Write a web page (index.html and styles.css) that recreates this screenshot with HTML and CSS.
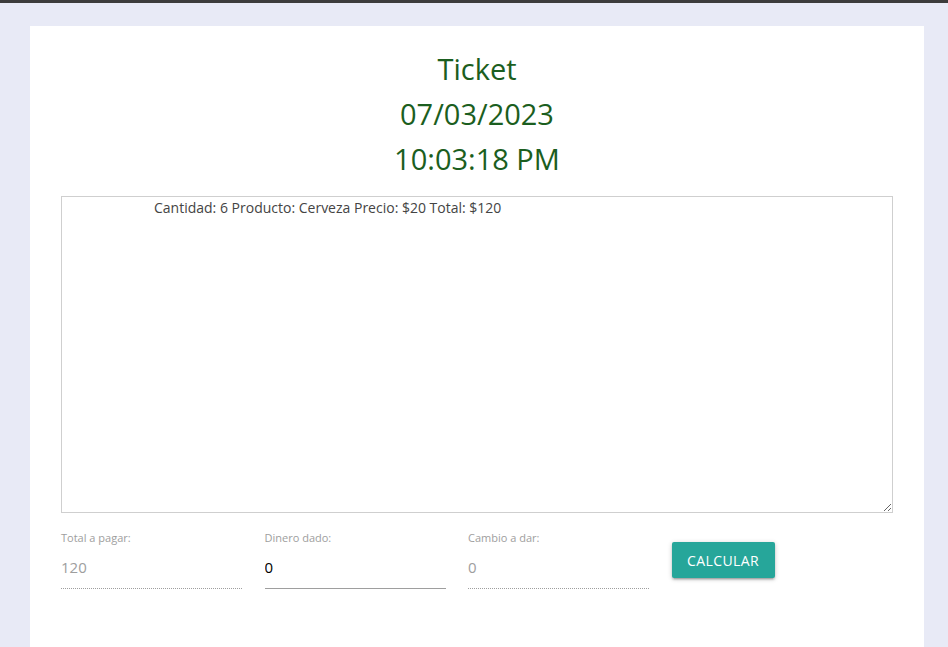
FILE: index.html
```html
<!DOCTYPE html>
<html lang="es">
<head>
<meta charset="utf-8">
<title>Ticket</title>
<link rel="stylesheet" href="styles.css">
</head>
<body>
<div class="topbar"></div>
<main class="card">
  <div class="heading">
    <div>Ticket</div>
    <div>07/03/2023</div>
    <div>10:03:18 PM</div>
  </div>
  <textarea class="ticket">Cantidad: 6 Producto: Cerveza Precio: $20 Total: $120</textarea>
  <div class="row">
    <div class="field">
      <label class="label">Total a pagar:</label>
      <input class="input disabled" type="text" value="120" disabled>
    </div>
    <div class="field">
      <label class="label">Dinero dado:</label>
      <input class="input active" type="text" value="0">
    </div>
    <div class="field">
      <label class="label">Cambio a dar:</label>
      <input class="input disabled" type="text" value="0" disabled>
    </div>
    <button class="btn">CALCULAR</button>
  </div>
</main>
</body>
</html>
```

FILE: styles.css
```css
html, body {
  margin: 0;
  padding: 0;
  height: 100%;
}
body {
  background: #e8eaf6;
  font-family: "Open Sans", "Noto Sans", sans-serif;
  overflow: hidden;
}
.topbar {
  height: 3px;
  background: #3c3c3c;
}
.card {
  background: #fff;
  margin: 23px 24px 0 30px;
  padding: 20px 31px 60px 31px;
  min-height: 600px;
  box-sizing: border-box;
}
.heading {
  text-align: center;
  color: #1b5e20;
  font-size: 29px;
  line-height: 45px;
  font-weight: 400;
}
.ticket {
  display: block;
  box-sizing: border-box;
  width: 100%;
  height: 317px;
  margin-top: 15px;
  border: 1px solid #cfcfcf;
  padding: 1px 2px;
  text-indent: 90px;
  font-family: "Open Sans", "Noto Sans", sans-serif;
  font-size: 14px;
  line-height: 20px;
  color: #444;
  resize: vertical;
  outline: none;
}
.row {
  display: flex;
  align-items: flex-start;
  gap: 22.5px;
  margin-top: 18px;
}
.field {
  display: flex;
  flex-direction: column;
  width: 181px;
}
.label {
  font-size: 11px;
  color: #9e9e9e;
  line-height: 14px;
}
.input {
  box-sizing: border-box;
  border: none;
  background: transparent;
  font-family: "Open Sans", "Noto Sans", sans-serif;
  font-size: 15px;
  height: 39px;
  padding: 0 0 5px 0;
  margin-top: 5px;
  outline: none;
}
.input.disabled {
  color: #9e9e9e;
  border-bottom: 1px dotted #9e9e9e;
}
.input.active {
  color: #000;
  border-bottom: 1px solid #9e9e9e;
}
.btn {
  margin-top: 11px;
  width: 103px;
  height: 36px;
  border: none;
  border-radius: 2px;
  background: #26a69a;
  color: #fff;
  font-family: "Open Sans", "Noto Sans", sans-serif;
  font-size: 14px;
  letter-spacing: 0.4px;
  box-shadow: 0 2px 2px 0 rgba(0,0,0,.14), 0 3px 1px -2px rgba(0,0,0,.12), 0 1px 5px 0 rgba(0,0,0,.2);
  padding: 0;
}
```
